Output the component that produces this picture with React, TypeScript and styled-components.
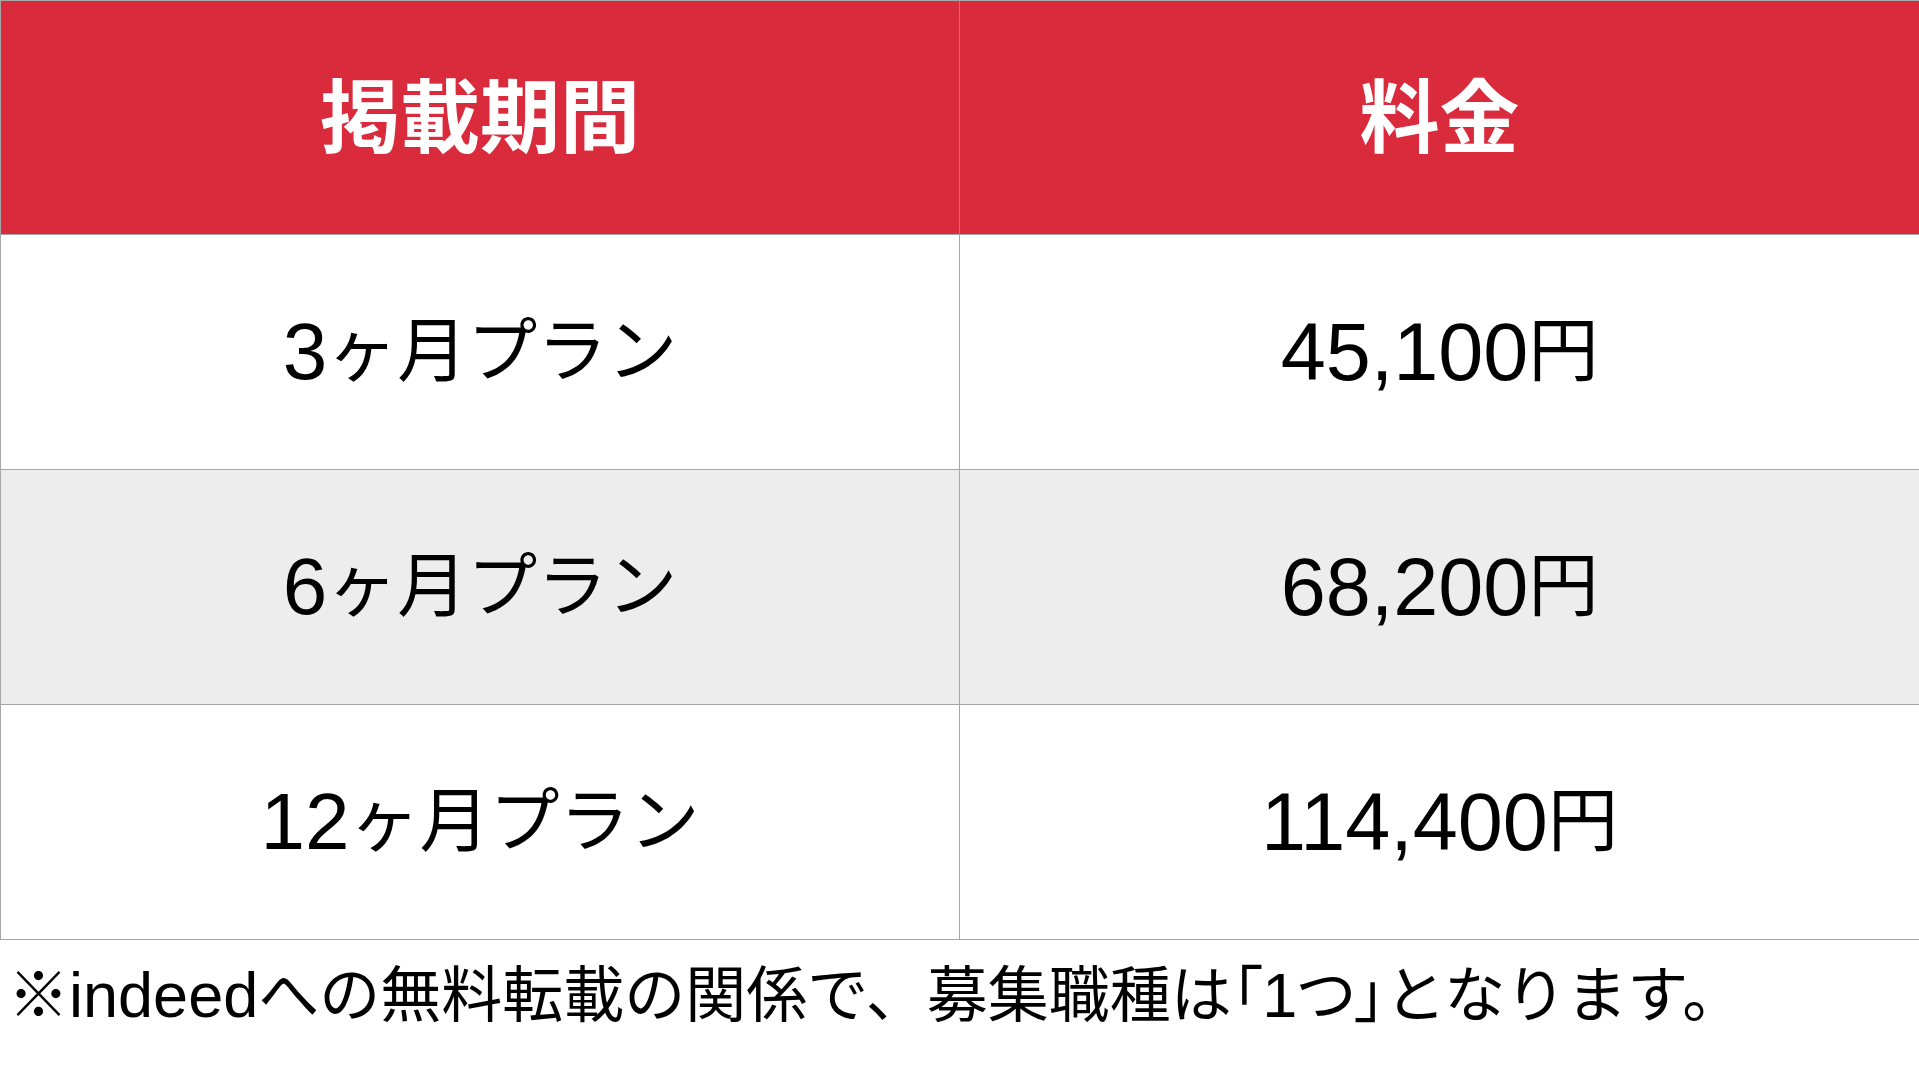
import React from 'react';
import styled, {createGlobalStyle} from 'styled-components';

type Plan = {
    months: string;
    price: string;
};

const plans: Plan[] = [
    {months: '3', price: '45,100'},
    {months: '6', price: '68,200'},
    {months: '12', price: '114,400'},
];

const GlobalStyle = createGlobalStyle`
    html, body {
        margin: 0;
        padding: 0;
        background: #ffffff;
    }
    body {
        width: 1919px;
        height: 1080px;
        overflow: hidden;
        font-family: 'Liberation Sans', 'Noto Sans CJK JP', sans-serif;
        color: #000000;
    }
`;

const Page = styled.div`
    display: flex;
    flex-direction: column;
    width: 1919px;
    height: 1080px;
`;

const Table = styled.div`
    display: grid;
    grid-template-columns: 960px 1fr;
    grid-template-rows: 234px repeat(3, 235px);
    border-top: 1px solid #a6a6a6;
`;

const HeaderCell = styled.div`
    display: flex;
    align-items: center;
    justify-content: center;
    box-sizing: border-box;
    background: #d92b3c;
    color: #ffffff;
    font-family: 'Noto Sans CJK JP', sans-serif;
    font-weight: 700;
    font-size: 80px;
    line-height: 1;
    padding-bottom: 14px;
    border-bottom: 1px solid #a6a6a6;
    &:first-child {
        border-left: 1px solid #a6a6a6;
        border-right: 1px solid #c9707a;
    }
`;

const BodyCell = styled.div<{$shaded: boolean; $first?: boolean}>`
    display: flex;
    align-items: center;
    justify-content: center;
    box-sizing: border-box;
    background: ${(p) => (p.$shaded ? '#ededed' : '#ffffff')};
    font-size: 70px;
    line-height: 1;
    border-bottom: 1px solid #a6a6a6;
    border-left: ${(p) => (p.$first ? '1px solid #a6a6a6' : 'none')};
    border-right: ${(p) => (p.$first ? '1px solid #a6a6a6' : 'none')};
`;

const Latin = styled.span<{$size: number}>`
    font-family: 'Liberation Sans', sans-serif;
    font-size: ${(p) => p.$size}px;
`;

const Proportional = styled.span`
    font-feature-settings: 'palt';
`;

const Note = styled.p`
    margin: 0;
    padding: 18px 0 0 8px;
    font-size: 61px;
    line-height: 1.2;
    white-space: nowrap;
`;

const App = () => {
    return (
        <Page>
            <GlobalStyle/>
            <Table>
                <HeaderCell>掲載期間</HeaderCell>
                <HeaderCell>料金</HeaderCell>
                {plans.map((plan, i) => (
                    <React.Fragment key={plan.months}>
                        <BodyCell
                            $shaded={i === 1}
                            $first={true}
                        >
                            <Latin $size={80}>{plan.months}</Latin>ヶ月プラン
                        </BodyCell>
                        <BodyCell $shaded={i === 1}>
                            <Latin $size={81}>{plan.price}</Latin>円
                        </BodyCell>
                    </React.Fragment>
                ))}
            </Table>
            <Note>
                ※<Latin $size={63}>indeed</Latin>への無料転載の関係で、募集職種は
                <Proportional>「<Latin $size={63}>1</Latin>つ」</Proportional>となります。
            </Note>
        </Page>
    );
};

export default App;
